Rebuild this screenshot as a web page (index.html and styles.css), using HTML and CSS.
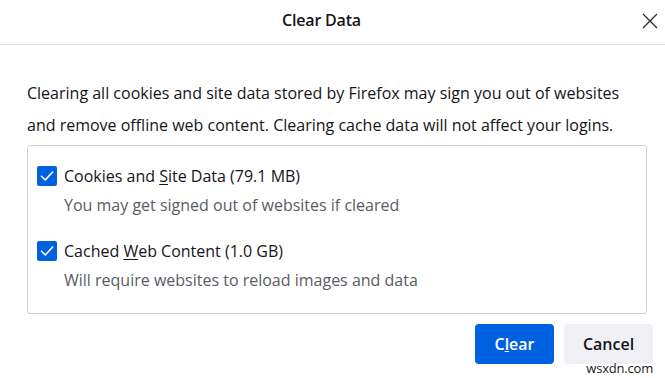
FILE: index.html
```html
<!DOCTYPE html>
<html>
<head>
<meta charset="utf-8">
<link rel="stylesheet" href="styles.css">
</head>
<body>
<div class="dialog">
  <header class="header">
    <div class="title">Clear Data</div>
    <button class="close" aria-label="Close">
      <svg width="16" height="16" viewBox="0 0 16 16"><path d="M1 1 L15 15 M15 1 L1 15" stroke="#2b2a33" stroke-width="1.3" fill="none"/></svg>
    </button>
  </header>
  <div class="content">
    <p class="intro">Clearing all cookies and site data stored by Firefox may sign you out of websites and remove offline web content. Clearing cache data will not affect your logins.</p>
    <div class="box">
      <div class="option">
        <div class="row">
          <span class="check"><svg width="20" height="20" viewBox="0 0 20 20"><path d="M4.5 10.2 L8.3 14 L15.6 6" stroke="#fff" stroke-width="1.6" fill="none" stroke-linecap="round" stroke-linejoin="round"/></svg></span>
          <span class="label">Cookies and <u>S</u>ite Data (79.1 MB)</span>
        </div>
        <div class="desc">You may get signed out of websites if cleared</div>
      </div>
      <div class="option">
        <div class="row">
          <span class="check"><svg width="20" height="20" viewBox="0 0 20 20"><path d="M4.5 10.2 L8.3 14 L15.6 6" stroke="#fff" stroke-width="1.6" fill="none" stroke-linecap="round" stroke-linejoin="round"/></svg></span>
          <span class="label">Cached <u>W</u>eb Content (1.0 GB)</span>
        </div>
        <div class="desc">Will require websites to reload images and data</div>
      </div>
    </div>
    <div class="actions">
      <button class="btn primary">C<u>l</u>ear</button>
      <button class="btn secondary">Cancel</button>
    </div>
  </div>
  <div class="watermark">wsxdn.com</div>
</div>
</body>
</html>
```
FILE: styles.css
```css
html, body {
  margin: 0;
  padding: 0;
  background: #fff;
}
body {
  font-family: "Open Sans", "Noto Sans", "Liberation Sans", sans-serif;
  color: #15141a;
}
.dialog {
  position: relative;
  width: 665px;
  height: 378px;
  background: #fff;
}
.header {
  position: relative;
  height: 44px;
  border-bottom: 1px solid #e0e0e6;
  display: flex;
  align-items: center;
  justify-content: center;
  padding-right: 22px;
}
.title {
  font-size: 16px;
  font-weight: 600;
  letter-spacing: -0.2px;
  margin-top: -4px;
}
.close {
  position: absolute;
  right: 4px;
  top: 10px;
  width: 22px;
  height: 22px;
  border: 0;
  background: transparent;
  padding: 0;
  display: flex;
  align-items: center;
  justify-content: center;
}
.content {
  padding: 0 18px 0 27px;
}
.intro {
  margin: 32px 0 4px;
  max-width: 605px;
  font-size: 16px;
  line-height: 32px;
  letter-spacing: 0;
}
.box {
  border: 1px solid #cfcfd8;
  border-radius: 3px;
  padding: 0 9px 22px;
}
.option {
  margin-top: 19px;
}
.option + .option {
  margin-top: 24px;
}
.row {
  display: flex;
  align-items: center;
  gap: 7px;
}
.check {
  width: 20px;
  height: 20px;
  border-radius: 2px;
  background: #0061e0;
  display: flex;
}
.label {
  font-size: 16px;
}
.label u {
  text-underline-offset: 2px;
}
.desc {
  margin-left: 27px;
  margin-top: 7px;
  font-size: 16px;
  color: #5b5b66;
}
.actions {
  display: flex;
  justify-content: flex-end;
  gap: 10px;
  margin-top: 10px;
  margin-right: -6px;
}
.btn {
  height: 40px;
  border: 0;
  border-radius: 4px;
  font-family: inherit;
  font-size: 16px;
  font-weight: 600;
  padding: 0;
}
.primary {
  width: 79px;
  background: #0061e0;
  color: #fff;
}
.secondary {
  width: 89px;
  background: #f0f0f4;
  color: #15141a;
}
.watermark {
  position: absolute;
  right: 12px;
  bottom: 1px;
  font-size: 13px;
  line-height: 18px;
  color: #222;
  letter-spacing: -0.2px;
}
```
